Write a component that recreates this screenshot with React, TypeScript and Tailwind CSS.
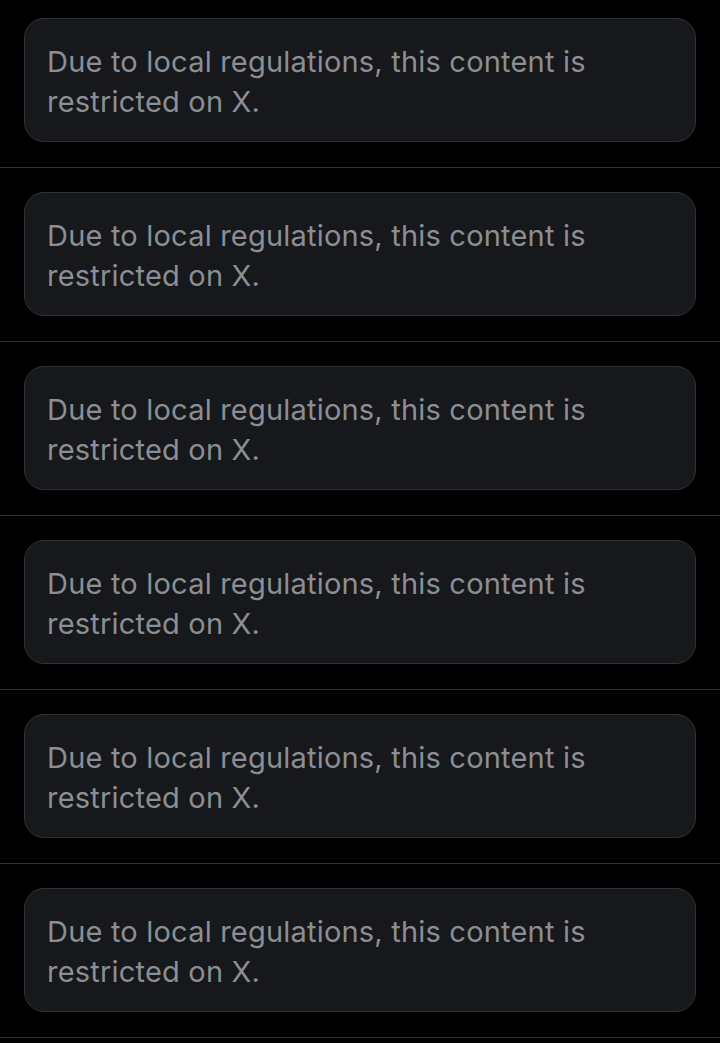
const items = Array.from({ length: 6 }, (_, i) => i);

export default function App() {
  return (
    <div className="min-h-[1043px] w-[720px] overflow-hidden bg-black" style={{ fontFamily: 'Inter, "Noto Sans", sans-serif' }}>
      {items.map((i) => (
        <div
          key={i}
          className={`border-b border-[#2f3336] px-6 pb-[25px] ${i === 0 ? 'pt-[18px]' : 'pt-6'}`}
        >
          <div className="rounded-[20px] border border-[#2f3336] bg-[#16181c] pl-[22px] pr-4 pt-[23px] pb-[19px]">
            <p className="text-[29px] leading-[40px] tracking-[0.2px] text-[#8b8f94]">
              Due to local regulations, this content is restricted on X.
            </p>
          </div>
        </div>
      ))}
    </div>
  );
}
